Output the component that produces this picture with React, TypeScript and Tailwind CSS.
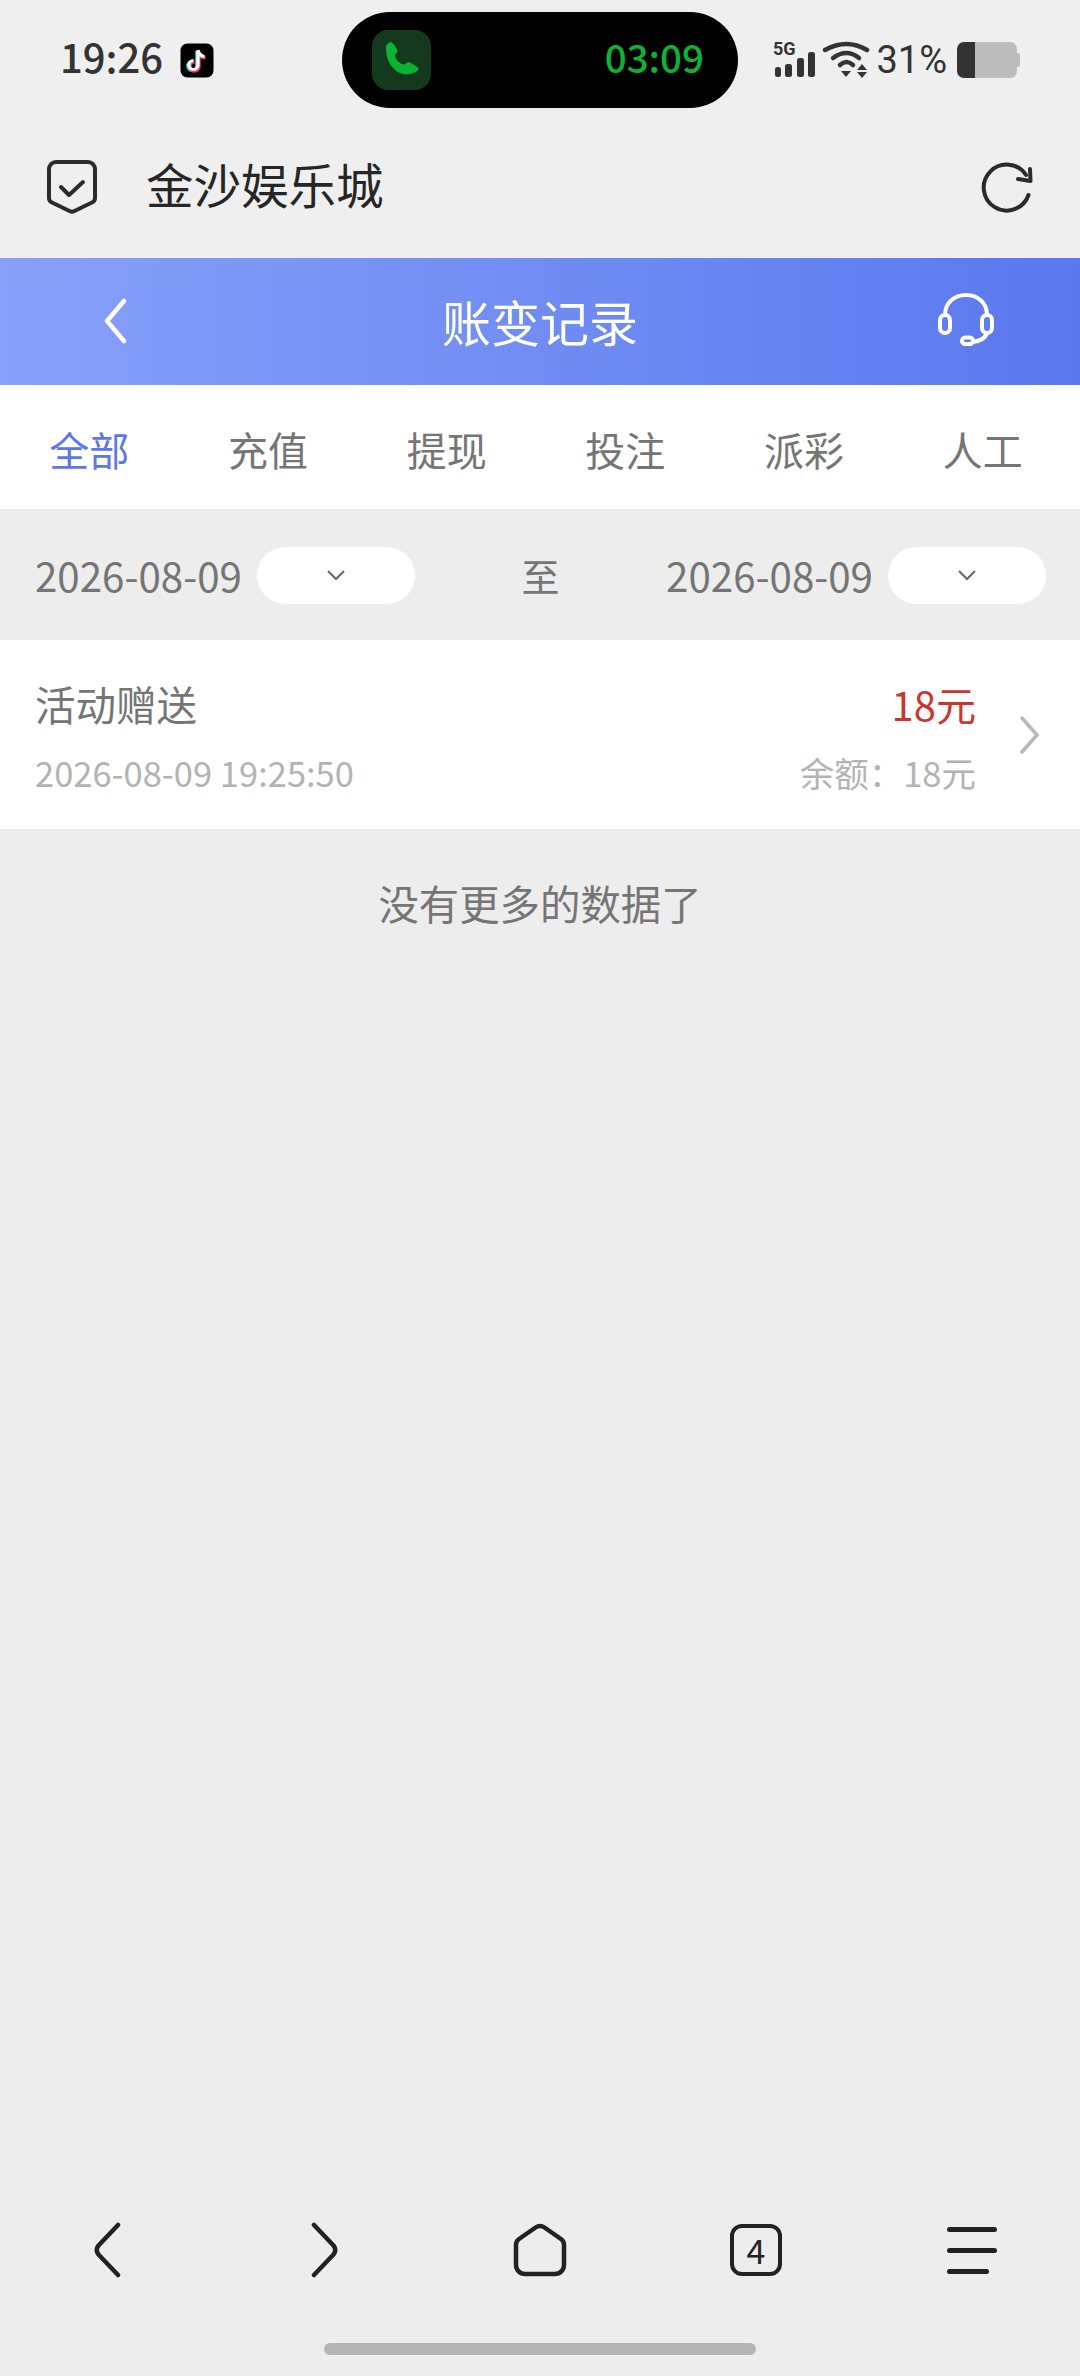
const font = "font-['Noto_Sans_CJK_SC','Noto_Sans',sans-serif]";

function TikTok() {
  return (
    <svg width="34" height="35" viewBox="0 0 34 35">
      <rect width="33" height="34" x="0.5" y="0.5" rx="7" fill="#000" />
      <path d="M18 7v15a4.500 4.500 0 1 1-4.500-4.500M18 7c.5 3.500 3 6 6.500 6.500" fill="none" stroke="#25f4ee" strokeWidth="3.400" transform="translate(-1,1)" />
      <path d="M18 7v15a4.500 4.500 0 1 1-4.500-4.500M18 7c.5 3.500 3 6 6.500 6.500" fill="none" stroke="#fe2c55" strokeWidth="3.400" transform="translate(1,1.500)" />
      <path d="M18 7v15a4.500 4.500 0 1 1-4.500-4.500M18 7c.5 3.500 3 6 6.500 6.500" fill="none" stroke="#fff" strokeWidth="3.200" />
    </svg>
  );
}

function Phone() {
  return (
    <div className="flex h-[60px] w-[59px] items-center justify-center rounded-[16px] bg-[#14391c]">
      <svg width="36" height="38" viewBox="0 0 36 38">
        <path d="M2 6.500C2 3 6 0 8.500 2c2 1.800 4 5 5 7.500.8 2-2.500 3-2.500 5 0 3.500 5 8.500 8.500 9 2 .3 3.300-2.800 5.300-2.300 2.400.7 6.700 3.300 9 5.300 1.600 1.500 0 3.500-2 4.500-4 2-9 3-13 2C9 30.500 1.500 20 2 6.500Z" fill="#0cb232" />
      </svg>
    </div>
  );
}

function StatusBar() {
  return (
    <div className="flex h-[120px] items-center pl-[60px] pr-[60px]">
      <div className="flex w-[282px] items-center gap-[17px]">
        <span className={`${font} pb-[8px] text-[40px] leading-none font-medium text-[#333]`}>19:26</span>
        <TikTok />
      </div>
      <div className="flex h-[96px] w-[396px] items-center justify-between rounded-full bg-black pl-[30px] pr-[34px]">
        <Phone />
        <span className={`${font} pb-[7px] text-[38.500px] leading-none font-medium text-[#0fb239]`}>03:09</span>
      </div>
      <div className="ml-auto flex items-center gap-[6px]">
        <svg width="44" height="44" viewBox="0 -6 44 44" className="mt-[-6px] text-[#333]">
          <text x="1" y="14" fontSize="18" fontWeight="700" fontFamily="Roboto, sans-serif" fill="currentColor">5G</text>
          <rect x="3" y="26" width="6" height="10" rx="2.500" fill="currentColor" />
          <rect x="13" y="23" width="7" height="13" rx="2.500" fill="currentColor" />
          <rect x="25" y="17" width="7" height="19" rx="2.500" fill="currentColor" />
          <rect x="36" y="11" width="7" height="25" rx="2.500" fill="currentColor" />
        </svg>
        <svg width="48" height="38" viewBox="0 0 48 38" fill="none" stroke="#333" strokeWidth="4.500" strokeLinecap="round">
          <path d="M3 9Q24.500-3 45 9" />
          <path d="M11 17Q24.500 7 37 17" />
          <path d="M18 24Q24.500 18 31 24" />
          <path d="M19 30H29L24 36Z" fill="#333" stroke="none" />
          <path d="M35 29 40 23 45 29ZM35 31H45L40 37Z" fill="#333" stroke="none" />
        </svg>
        <span className="font-['Roboto',sans-serif] text-[38px] leading-none font-normal text-[#333]">31%</span>
        <div className="ml-[4px] flex h-[36px] items-center">
          <div className="h-[36px] w-[18px] rounded-l-[7px] bg-[#333]" />
          <div className="h-[36px] w-[42px] rounded-r-[7px] bg-[#bcbcbc]" />
          <div className="h-[14px] w-[3px] rounded-r-[3px] bg-[#bcbcbc]" />
        </div>
      </div>
    </div>
  );
}

function BrowserBar() {
  return (
    <div className="flex h-[138px] items-center justify-between pl-[47px] pr-[46px] pb-[5px]">
      <div className="flex items-center gap-[49px]">
        <svg width="50" height="54" viewBox="0 0 50 54" fill="none" stroke="#2b2b2b" strokeWidth="4" strokeLinecap="round" strokeLinejoin="round">
          <path d="M9 2h32a7 7 0 0 1 7 7v29a5 5 0 0 1-2.500 4.300L27.500 51a5 5 0 0 1-5 0L4.500 42.300A5 5 0 0 1 2 38V9a7 7 0 0 1 7-7Z" />
          <path d="M14 27l8 8 14-13" />
        </svg>
        <span className={`${font} pb-[5px] text-[47.500px] leading-none text-[#262626]`}>金沙娱乐城</span>
      </div>
      <svg width="54" height="52" viewBox="0 0 54 52" fill="none" stroke="#2b2b2b" strokeWidth="4" strokeLinecap="round" strokeLinejoin="round">
        <path d="M48.500 34A23 23 0 1 1 46 14" />
        <path d="M50 8l.5 12L38 18" />
      </svg>
    </div>
  );
}

function Header() {
  return (
    <div className="grid h-[127px] grid-cols-[1fr_auto_1fr] items-center bg-gradient-to-r from-[#87a0f9] to-[#5b78ee] px-[85px]">
      <svg width="26" height="46" viewBox="0 0 26 46" fill="none" stroke="#fff" strokeWidth="4.500" strokeLinecap="round" strokeLinejoin="round" className="ml-[17px] mt-[-2px]">
        <path d="M22 3 5 23l17 20" />
      </svg>
      <span className={`${font} pb-[2px] text-[49px] leading-none text-white`}>账变记录</span>
      <svg width="58" height="54" viewBox="0 0 58 54" fill="none" stroke="#fff" strokeWidth="4" strokeLinecap="round" className="mt-[-6px] justify-self-end">
        <path d="M8 23C8 11 17 3 29 3s21 8 21 20" />
        <rect x="3" y="23" width="10" height="18" rx="5" />
        <rect x="45" y="23" width="10" height="18" rx="5" />
        <path d="M50 41c-2 6-7 8-14 9" />
        <rect x="25" y="45.500" width="11" height="6.500" rx="3.250" />
      </svg>
    </div>
  );
}

const tabs = ["全部", "充值", "提现", "投注", "派彩", "人工"];

function Tabs() {
  return (
    <div className="grid h-[125px] grid-cols-6 items-center border-b border-[#e6e6e6] bg-white pr-[8px]">
      {tabs.map((t, i) => (
        <span key={t} className={`${font} pt-[4px] text-center text-[40px] leading-none ${i === 0 ? "text-[#5a78e8]" : "text-[#757575]"}`}>
          {t}
        </span>
      ))}
    </div>
  );
}

function DatePick() {
  return (
    <div className="flex items-center gap-[15px]">
      <span className={`${font} text-[40.300px] leading-none text-[#757575]`}>2026-08-09</span>
      <div className="flex h-[57px] w-[158px] items-center justify-center rounded-full bg-white">
        <svg width="20" height="12" viewBox="0 0 20 12" fill="none" stroke="#666" strokeWidth="2">
          <path d="M2 2l8 8 8-8" />
        </svg>
      </div>
    </div>
  );
}

function DateRow() {
  return (
    <div className="flex h-[130px] items-center justify-between pl-[35px] pr-[34px]">
      <DatePick />
      <span className={`${font} text-[38px] leading-none text-[#757575]`}>至</span>
      <DatePick />
    </div>
  );
}

function Record() {
  return (
    <div className="flex h-[190px] items-center justify-between border-b border-[#e6e6e6] bg-white pl-[35px] pr-[40px] pt-[3px]">
      <div className="flex flex-col gap-[23px]">
        <span className={`${font} text-[40.500px] leading-[48px] text-[#757575]`}>活动赠送</span>
        <span className={`${font} text-[34.500px] leading-[42px] text-[#b3b3b3]`}>2026-08-09 19:25:50</span>
      </div>
      <div className="flex items-center gap-[44px]">
        <div className="flex flex-col items-end gap-[23px]">
          <span className={`${font} text-[40px] leading-[48px] text-[#c9372e]`}>18元</span>
          <span className={`${font} text-[34.500px] leading-[42px] text-[#b3b3b3]`}>余额：18元</span>
        </div>
        <svg width="20" height="38" viewBox="0 0 20 38" fill="none" stroke="#b8b8b8" strokeWidth="3.500" strokeLinecap="round" className="mb-[3px]">
          <path d="M2 2l15 17L2 36" />
        </svg>
      </div>
    </div>
  );
}

function BottomNav() {
  return (
    <div className="mt-auto flex flex-col items-center">
      <div className="grid h-[60px] w-full grid-cols-5 items-center justify-items-center">
        <svg width="32" height="56" viewBox="0 0 32 56" fill="none" stroke="#222" strokeWidth="4.500" strokeLinecap="round" strokeLinejoin="round">
          <path d="M26 3 6.500 23.500Q3 28 6.500 32.500L26 53" />
        </svg>
        <svg width="32" height="56" viewBox="0 0 32 56" fill="none" stroke="#222" strokeWidth="4.500" strokeLinecap="round" strokeLinejoin="round">
          <path d="M6 3 25.500 23.500Q29 28 25.500 32.500L6 53" />
        </svg>
        <svg width="54" height="54" viewBox="0 0 54 54" fill="none" stroke="#222" strokeWidth="4.500" strokeLinejoin="round">
          <path d="M22.500 4.500Q27 1.500 31.500 4.500L48 16Q51 18 51 22V42A9 9 0 0 1 42 51H12A9 9 0 0 1 3 42V22Q3 18 6 16Z" />
        </svg>
        <div className={`${font} flex h-[52px] w-[52px] items-center justify-center rounded-[12px] border-[4px] border-[#222] text-[34px] leading-none text-[#222]`}>4</div>
        <div className="flex w-[50px] flex-col gap-[16px]">
          <div className="h-[5px] w-[50px] rounded-full bg-[#222]" />
          <div className="h-[5px] w-[50px] rounded-full bg-[#222]" />
          <div className="h-[5px] w-[42px] rounded-full bg-[#222]" />
        </div>
      </div>
      <div className="mt-[63px] mb-[21px] h-[12px] w-[432px] rounded-full bg-[#b4b4b4]" />
    </div>
  );
}

export default function App() {
  return (
    <div className="flex h-[2376px] w-[1080px] flex-col overflow-hidden bg-[#ededed]">
      <div className="bg-[#efefef]">
        <StatusBar />
        <BrowserBar />
      </div>
      <Header />
      <Tabs />
      <DateRow />
      <Record />
      <div className={`${font} pt-[53px] text-center text-[40.400px] leading-none text-[#757575]`}>没有更多的数据了</div>
      <BottomNav />
    </div>
  );
}
